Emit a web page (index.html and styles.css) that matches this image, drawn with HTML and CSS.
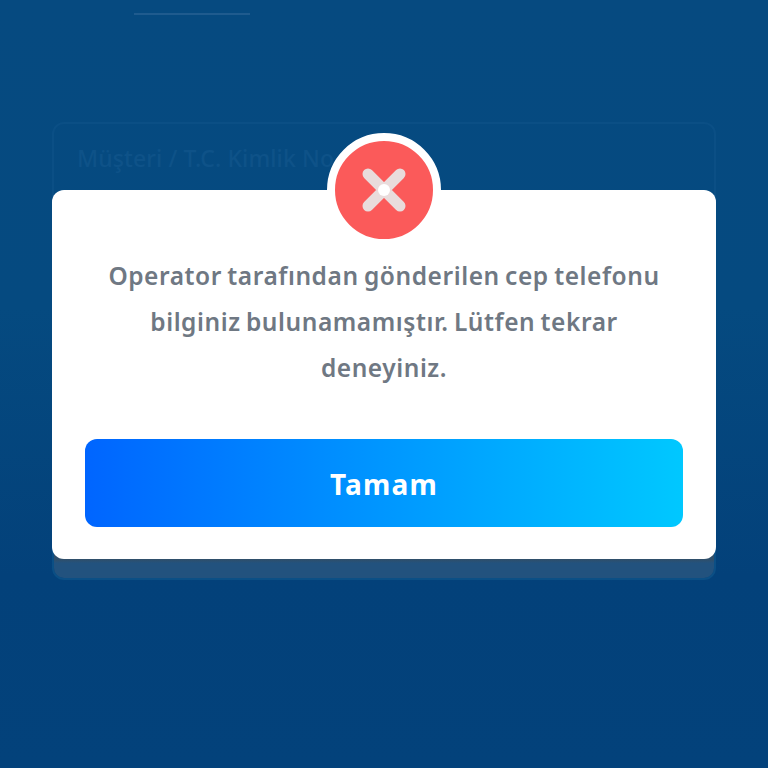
FILE: index.html
```html
<!DOCTYPE html>
<html lang="tr">
<head>
<meta charset="utf-8">
<title>Hata</title>
<link rel="stylesheet" href="styles.css">
</head>
<body>
<div class="screen">
  <div class="tab-line"></div>
  <div class="form-card">
    <div class="form-label">Müşteri / T.C. Kimlik No</div>
    <div class="form-band"></div>
  </div>
  <div class="modal">
    <div class="badge">
      <svg class="badge-icon" viewBox="0 0 46 46" aria-hidden="true">
        <path class="cross" d="M7 7L39 39M39 7L7 39"/>
        <circle class="cross-center" cx="23" cy="23" r="6"/>
      </svg>
    </div>
    <p class="message">Operator tarafından gönderilen cep telefonu bilginiz bulunamamıştır. Lütfen tekrar deneyiniz.</p>
    <button class="ok-button"><span class="ok-label">Tamam</span></button>
  </div>
</div>
</body>
</html>
```
FILE: styles.css
```css
* { box-sizing: border-box; }
html, body { margin: 0; padding: 0; }
body { font-family: "Noto Sans", "Open Sans", sans-serif; }

.screen {
  position: relative;
  width: 768px;
  height: 768px;
  overflow: hidden;
  padding-top: 13px;
  background: linear-gradient(180deg, #064a80 0%, #054a80 40%, #03417a 75%, #03427b 100%);
}

.tab-line {
  width: 116px;
  height: 2px;
  margin-left: 134px;
  background: #1f5b8e;
}

.form-card {
  position: relative;
  height: 458px;
  margin: 107px 52px 0;
  padding: 18px 23px 0;
  border: 2px solid #0b4f85;
  border-radius: 12px;
  overflow: hidden;
}

.form-label {
  font-size: 23px;
  font-weight: 500;
  line-height: 32px;
  letter-spacing: 0.1px;
  color: #0e5288;
}

.form-band {
  position: absolute;
  left: -2px;
  right: -2px;
  bottom: -2px;
  height: 60px;
  background: linear-gradient(180deg, #2f4f6b 0%, #2f4f6b 66%, #22527e 72%, #22527e 100%);
}

.modal {
  position: absolute;
  left: 52px;
  top: 190px;
  width: 664px;
  height: 369px;
  padding: 63px 33px 32px;
  background: #fff;
  border-radius: 12px;
  display: flex;
  flex-direction: column;
  align-items: stretch;
}

.badge {
  position: absolute;
  left: 275px;
  top: -57px;
  width: 114px;
  height: 114px;
  border: 8.5px solid #fff;
  border-radius: 50%;
  background: #fb5a5a;
  display: flex;
  align-items: center;
  justify-content: center;
}

.badge-icon { width: 46px; height: 46px; }
.cross { fill: none; stroke: #e9dcdc; stroke-width: 11; stroke-linecap: round; }
.cross-center { fill: #fff; }

.message {
  margin: 0;
  padding: 0 15px;
  font-size: 24.5px;
  font-weight: 600;
  line-height: 46px;
  letter-spacing: 0.55px;
  word-spacing: -1.5px;
  color: #6f7883;
  text-align: center;
}

.ok-button {
  margin-top: auto;
  height: 88px;
  padding: 2px 0 0;
  border: 0;
  border-radius: 12px;
  background: linear-gradient(90deg, #0065ff 0%, #00c8ff 100%);
  color: #fff;
  font-family: "Noto Sans", "Open Sans", sans-serif;
  font-size: 28px;
  font-weight: 700;
  letter-spacing: 1.2px;
}
```
